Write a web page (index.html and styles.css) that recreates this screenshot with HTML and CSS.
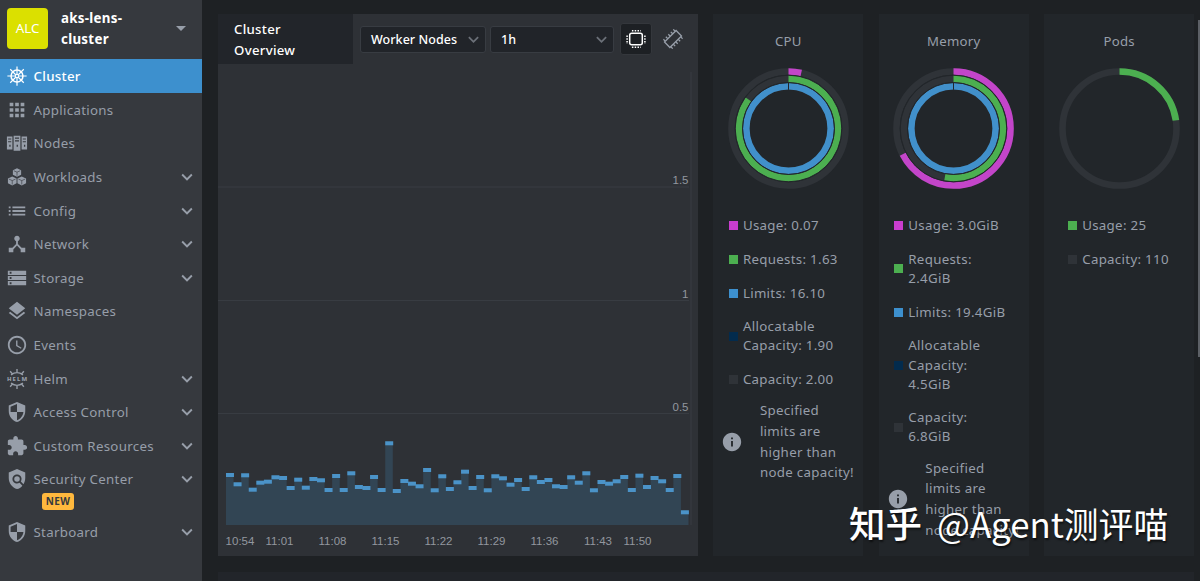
FILE: index.html
```html
<!DOCTYPE html>
<html lang="en">
<head>
    <meta charset="UTF-8">
    <meta name="viewport" content="width=device-width, initial-scale=1.0">
    <title>aks-lens-cluster</title>
    <link rel="stylesheet" href="styles.css">
</head>
<body>
    <!-- icons -->
    <svg class="sprite">
        <symbol id="wheel" viewBox="0 0 24 24">
            <g fill="none" stroke="currentColor">
                <circle cx="12" cy="12" r="6.500" stroke-width="1.700"/>
                <circle cx="12" cy="12" r="1.800" stroke-width="1.200"/>
                <path stroke-width="1.300" d="M12 1.500v8.500M12 14v8.500M1.500 12H10M14 12h8.500M4.600 4.600l6 6M13.400 13.400l6 6M19.400 4.600l-6 6M10.600 13.400l-6 6"/>
            </g>
        </symbol>
        <symbol id="apps" viewBox="0 0 24 24"><path d="M4 8h4V4H4v4zm6 12h4v-4h-4v4zm-6 0h4v-4H4v4zm0-6h4v-4H4v4zm6 0h4v-4h-4v4zm6-10v4h4V4h-4zm-6 4h4V4h-4v4zm6 6h4v-4h-4v4zm0 6h4v-4h-4v4z"/></symbol>
        <symbol id="nodes" viewBox="0 0 24 24"><path fill-rule="evenodd" d="M1 5h6v14H1zM2.300 7v1.300h3.400V7zM2.300 10v1.300h3.400V10zM3.600 14v2h1.400v-2zM8.300 4h7.400v16.500H8.300zM9.800 6v1.300h4.400V6zM9.800 9v1.300h4.400V9zM11.600 14v2h1.400v-2zM17 5h6v14h-6zM18.300 7v1.300h3.400V7zM18.300 10v1.300h3.400V10zM19.600 14v2h1.400v-2z"/></symbol>
        <symbol id="cubes" viewBox="0 0 24 24">
            <path d="M12 2.500l4.500 2v5L12 11.700 7.500 9.500v-5zM6.800 11.500l4.700 2v5.300l-4.700 2.400-4.700-2.400v-5.300zM17.200 11.500l4.700 2v5.300l-4.700 2.400-4.700-2.400v-5.300z"/>
            <path fill="none" stroke="#36393e" stroke-width=".7" d="M8.500 5.200l3.500 1.500 3.500-1.500M12 6.700v4M3.200 14.300l3.600 1.600 3.600-1.600M6.800 15.900v4.300M13.600 14.300l3.600 1.600 3.600-1.600M17.200 15.900v4.300"/>
        </symbol>
        <symbol id="list" viewBox="0 0 24 24"><path d="M3 13h2v-2H3v2zm0 4h2v-2H3v2zm0-8h2V7H3v2zm4 4h14v-2H7v2zm0 4h14v-2H7v2zM7 7v2h14V7H7z"/></symbol>
        <symbol id="hub" viewBox="0 0 24 24"><path d="M17 16l-4-4V8.820C14.160 8.400 15 7.300 15 6c0-1.660-1.340-3-3-3S9 4.340 9 6c0 1.300.84 2.400 2 2.820V12l-4 4H3v5h5v-3.050l4-4.200 4 4.200V21h5v-5h-4z"/></symbol>
        <symbol id="storage" viewBox="0 0 24 24"><path d="M2 20h20v-4.600H2V20zm2-3.300h2v2H4v-2zM2 4v4.600h20V4H2zm4 3.300H4v-2h2v2zM2 14.300h20V9.700H2v4.600zM4 11h2v2H4v-2z"/></symbol>
        <symbol id="layers" viewBox="0 0 24 24"><path d="M11.990 18.540l-7.370-5.730L3 14.070l9 7 9-7-1.630-1.270-7.380 5.740zM12 16l7.360-5.730L21 9l-9-7-9 7 1.630 1.270L12 16z"/></symbol>
        <symbol id="clock" viewBox="0 0 24 24"><path d="M11.990 2C6.470 2 2 6.480 2 12s4.470 10 9.990 10C17.520 22 22 17.520 22 12S17.520 2 11.990 2zM12 20c-4.420 0-8-3.580-8-8s3.580-8 8-8 8 3.580 8 8-3.580 8-8 8zm.5-13H11v6l5.250 3.150.75-1.230-4.500-2.670z"/></symbol>
        <symbol id="helm" viewBox="0 0 24 24">
            <path fill="none" stroke="currentColor" stroke-width="1.500" d="M5.500 7.500Q12 2.500 18.500 7.500M12 1v4M4.500 3.500l2.600 3M19.500 3.500l-2.600 3M5.500 16.500Q12 21.500 18.500 16.500M12 19v4M4.500 20.500l2.600-3M19.500 20.500l-2.600-3"/>
            <text class="helm-text" x="12" y="14.600" text-anchor="middle" textLength="22">HELM</text>
        </symbol>
        <symbol id="shield" viewBox="0 0 24 24"><path d="M12 1L3 5v6c0 5.550 3.840 10.740 9 12 5.160-1.260 9-6.450 9-12V5l-9-4zm0 10.990h7c-.53 4.120-3.280 7.790-7 8.940V12H5V6.300l7-3.110v8.800z"/></symbol>
        <symbol id="puzzle" viewBox="0 0 24 24"><path d="M20.500 11H19V7c0-1.100-.9-2-2-2h-4V3.500C13 2.120 11.880 1 10.500 1S8 2.120 8 3.500V5H4c-1.100 0-1.990.9-1.990 2v3.800H3.500c1.490 0 2.700 1.210 2.700 2.700s-1.210 2.700-2.700 2.700H2V20c0 1.100.9 2 2 2h3.800v-1.500c0-1.490 1.210-2.700 2.700-2.700 1.490 0 2.700 1.210 2.700 2.700V22H17c1.100 0 2-.9 2-2v-4h1.500c1.380 0 2.500-1.120 2.500-2.500S21.880 11 20.500 11z"/></symbol>
        <symbol id="policy" viewBox="0 0 24 24"><path d="M21 5l-9-4-9 4v6c0 5.550 3.840 10.740 9 12 2.300-.56 4.330-1.900 5.880-3.710l-3.120-3.120c-1.940 1.290-4.580 1.070-6.290-.64-1.950-1.950-1.950-5.120 0-7.070 1.950-1.950 5.120-1.950 7.070 0 1.710 1.710 1.920 4.350.64 6.290l2.900 2.900C20.290 15.690 21 13.380 21 11V5z"/><circle cx="12" cy="12" r="3"/></symbol>
        <symbol id="down" viewBox="0 0 24 24"><path d="M7.410 8.590L12 13.170l4.590-4.580L18 10l-6 6-6-6 1.410-1.410z"/></symbol>
        <symbol id="info" viewBox="0 0 24 24"><path d="M12 2C6.480 2 2 6.480 2 12s4.480 10 10 10 10-4.480 10-10S17.520 2 12 2zm1 15h-2v-6h2v6zm0-8h-2V7h2v2z"/></symbol>
        <symbol id="cpu" viewBox="0 0 20 20">
            <g fill="none" stroke="currentColor">
                <rect x="3.700" y="4.200" width="12.600" height="11.600" rx="2" stroke-width="1.500"/>
                <path stroke-width="1.500" stroke-dasharray="1.500 1.300" d="M5.900 1.700h9M5.900 18.300h9M1.100 6.400v8.600M18.900 6.400v8.600"/>
            </g>
        </symbol>
        <symbol id="ram" viewBox="0 0 20 20">
            <g fill="none" stroke="currentColor" stroke-width="1.300" transform="rotate(-45 10 10)">
                <rect x="1.800" y="6.200" width="16.400" height="7.600"/>
                <path d="M3 14v2.600M6.500 14v2.600M10 14v2.600M13.500 14v2.600M17 14v2.600M3 6V3.400M6.500 6V3.400M10 6V3.400M13.500 6V3.400M17 6V3.400"/>
            </g>
        </symbol>
    </svg>

    <div class="app">
        <aside class="sidebar">
            <div class="cluster-header">
                <div class="avatar">ALC</div>
                <div class="cluster-name">aks-lens-<br>cluster</div>
                <div class="caret"></div>
            </div>
            <nav>
                <a class="item active"><svg class="icon"><use href="#wheel"/></svg><span>Cluster</span></a>
                <a class="item"><svg class="icon"><use href="#apps"/></svg><span>Applications</span></a>
                <a class="item"><svg class="icon"><use href="#nodes"/></svg><span>Nodes</span></a>
                <a class="item"><svg class="icon"><use href="#cubes"/></svg><span>Workloads</span><svg class="arrow"><use href="#down"/></svg></a>
                <a class="item"><svg class="icon"><use href="#list"/></svg><span>Config</span><svg class="arrow"><use href="#down"/></svg></a>
                <a class="item"><svg class="icon"><use href="#hub"/></svg><span>Network</span><svg class="arrow"><use href="#down"/></svg></a>
                <a class="item"><svg class="icon"><use href="#storage"/></svg><span>Storage</span><svg class="arrow"><use href="#down"/></svg></a>
                <a class="item"><svg class="icon"><use href="#layers"/></svg><span>Namespaces</span></a>
                <a class="item"><svg class="icon"><use href="#clock"/></svg><span>Events</span></a>
                <a class="item"><svg class="icon"><use href="#helm"/></svg><span>Helm</span><svg class="arrow"><use href="#down"/></svg></a>
                <a class="item"><svg class="icon"><use href="#shield"/></svg><span>Access Control</span><svg class="arrow"><use href="#down"/></svg></a>
                <a class="item"><svg class="icon"><use href="#puzzle"/></svg><span>Custom Resources</span><svg class="arrow"><use href="#down"/></svg></a>
                <a class="item"><svg class="icon"><use href="#policy"/></svg><span>Security Center</span><svg class="arrow"><use href="#down"/></svg></a>
                <div class="new-badge">NEW</div>
                <a class="item"><svg class="icon"><use href="#shield"/></svg><span>Starboard</span><svg class="arrow"><use href="#down"/></svg></a>
            </nav>
        </aside>

        <main class="main">
            <div class="overview">
                <section class="metrics">
                    <div class="toolbar">
                        <h1 class="title">Cluster Overview</h1>
                        <div class="select nodes-select"><span>Worker Nodes</span><svg class="select-arrow"><use href="#down"/></svg></div>
                        <div class="select time-select"><span>1h</span><svg class="select-arrow"><use href="#down"/></svg></div>
                        <div class="metric-btn selected"><svg><use href="#cpu"/></svg></div>
                        <div class="metric-btn"><svg><use href="#ram"/></svg></div>
                    </div>
                    <svg class="chart" id="chart" viewBox="0 0 480 492"></svg>
                </section>

                <section class="card">
                    <h2>CPU</h2>
                    <svg class="donut" data-rings="magenta:0.036,green:0.85,blue:1"></svg>
                    <ul class="legend">
                        <li><i class="magenta"></i><span>Usage: 0.07</span></li>
                        <li><i class="green"></i><span>Requests: 1.63</span></li>
                        <li><i class="blue"></i><span>Limits: 16.10</span></li>
                        <li><i class="navy"></i><span>Allocatable<br>Capacity: 1.90</span></li>
                        <li><i class="gray"></i><span>Capacity: 2.00</span></li>
                    </ul>
                    <div class="note">
                        <svg><use href="#info"/></svg>
                        <p>Specified<br>limits are<br>higher than<br>node capacity!</p>
                    </div>
                </section>

                <section class="card">
                    <h2>Memory</h2>
                    <svg class="donut" data-rings="magenta:0.675,green:0.528,blue:1"></svg>
                    <ul class="legend">
                        <li><i class="magenta"></i><span>Usage: 3.0GiB</span></li>
                        <li><i class="green"></i><span>Requests:<br>2.4GiB</span></li>
                        <li><i class="blue"></i><span>Limits: 19.4GiB</span></li>
                        <li><i class="navy"></i><span>Allocatable<br>Capacity:<br>4.5GiB</span></li>
                        <li><i class="gray"></i><span>Capacity:<br>6.8GiB</span></li>
                    </ul>
                    <div class="note">
                        <svg><use href="#info"/></svg>
                        <p>Specified<br>limits are<br>higher than<br>node capacity!</p>
                    </div>
                </section>

                <section class="card">
                    <h2>Pods</h2>
                    <svg class="donut" data-rings="green:0.227"></svg>
                    <ul class="legend small">
                        <li><i class="green"></i><span>Usage: 25</span></li>
                        <li><i class="gray"></i><span>Capacity: 110</span></li>
                    </ul>
                </section>
            </div>
            <section class="issues"></section>
        </main>
    </div>

    <div class="scrollbar"></div>
    <div class="watermark"><b>知乎</b><span>@Agent测评喵</span></div>

<script>
    // cpu usage bars, height in px
    const bars = [52, 42.7, 51.7, 37.3, 44.3, 45.3, 49.7, 49, 39, 47.3, 39.3, 48, 46.7, 37, 51, 37, 53.7, 40, 39, 50,
        37, 83.7, 36, 46, 43.3, 40.7, 57, 36.7, 50.7, 38, 44.7, 55.3, 39, 50, 36.7, 50.7, 48.7, 42.3, 47, 38,
        49.7, 45, 47, 40.7, 40, 49.7, 44.3, 53.7, 36.7, 45, 43.3, 45.7, 50, 37, 51.3, 40, 49, 45.7, 37, 51, 14.7];
    const times = [['10:54', 22], ['11:01', 61.5], ['11:08', 114.5], ['11:15', 167.5], ['11:22', 220.5],
        ['11:29', 273.5], ['11:36', 326.5], ['11:43', 380], ['11:50', 419.5]];
    const base = 461;
    const step = 462.5 / 61;

    let chart = '';
    [['1.5', 123], ['1', 236.5], ['0.5', 349.5]].forEach(([label, y]) => {
        chart += `<line class="grid" x1="0" x2="471" y1="${y}" y2="${y}"/>`;
        chart += `<text x="470.5" y="${y - 3}" text-anchor="end">${label}</text>`;
    });
    chart += '<line class="grid" x1="473" x2="473" y1="8" y2="461"/>';
    let area = `M8 ${base}`;
    let caps = '';
    bars.forEach((h, i) => {
        const x = 8 + i * step;
        area += `V${base - h}H${x + step}`;
        caps += `<rect class="cap" x="${x}" y="${base - h}" width="${step + 0.4}" height="4"/>`;
    });
    chart += `<path class="area" d="${area}V${base}z"/>${caps}`;
    times.forEach(([label, x]) => {
        chart += `<text x="${x}" y="481" text-anchor="middle">${label}</text>`;
    });
    document.getElementById('chart').innerHTML = chart;

    // donuts, outer ring first
    document.querySelectorAll('.donut').forEach((donut) => {
        donut.setAttribute('viewBox', '-60.5 -60.5 121 121');
        const rings = donut.dataset.rings.split(',');
        let out = '';
        rings.forEach((ring, i) => {
            const [color, value] = ring.split(':');
            const r = 57 - i * 7.4;
            out += `<circle class="track" r="${r}"/>`;
            out += `<circle class="ring ${color}" r="${r}" pathLength="1" stroke-dasharray="${value} 1" transform="rotate(-90)"/>`;
            if (i > 0) {
                out += `<circle class="divider" r="${r + 3.7}"/>`;
            }
            if (value == 1) {
                out += `<line class="divider" x1="0" x2="0" y1="${-r - 3.5}" y2="${-r + 3.5}"/>`;
            }
        });
        donut.innerHTML = out;
    });
</script>
</body>
</html>
```

FILE: styles.css
```css
* {
    box-sizing: border-box;
}

body {
    margin: 0;
    height: 581px;
    overflow: hidden;
    background: #1e2124;
    color: #979ea9;
    font-family: "Noto Sans", sans-serif;
    font-size: 13.3px;
    letter-spacing: 0.3px;
}

svg {
    fill: currentColor;
    flex-shrink: 0;
}

.sprite {
    display: none;
}

.helm-text {
    font-size: 6.5px;
    font-weight: 800;
    letter-spacing: 0;
}

.app {
    display: flex;
    height: 581px;
}

/* sidebar */
.sidebar {
    width: 202px;
    flex-shrink: 0;
    background: #36393e;
}

.cluster-header {
    display: flex;
    align-items: center;
    height: 59px;
    padding: 0 16px 2px 7px;
}

.avatar {
    width: 41px;
    height: 41px;
    line-height: 41px;
    border-radius: 4px;
    background: #dbe000;
    color: #fff;
    text-align: center;
    letter-spacing: 0;
}

.cluster-name {
    flex: 1;
    margin-left: 13px;
    color: #fff;
    font-weight: 700;
    line-height: 21px;
}

.caret {
    border: 5px solid transparent;
    border-top-color: #979ea9;
    border-bottom: 0;
}

.item {
    display: flex;
    align-items: center;
    height: 33.6px;
    padding: 0 4px 0 6px;
}

.item.active {
    height: 34px;
    background: #3d90ce;
    color: #fff;
    font-weight: 500;
}

.item span {
    flex: 1;
    margin-left: 5.5px;
}

.icon {
    width: 22px;
    height: 22px;
}

.arrow {
    width: 22px;
    height: 22px;
}

.new-badge {
    width: 32px;
    height: 17px;
    margin: -3px 0 5.5px 42px;
    border-radius: 3px;
    background: #ffb83d;
    color: #36393e;
    font-size: 10px;
    font-weight: 700;
    line-height: 17px;
    text-align: center;
}

/* main */
.main {
    flex: 1;
    padding: 14px 6px 0 16px;
}

.overview {
    display: grid;
    grid-template-columns: 480px 150px 150px 150px;
    column-gap: 15.4px;
    height: 542px;
}

.metrics {
    background: #2e3136;
}

.toolbar {
    display: flex;
    align-items: center;
    height: 50px;
}

.title {
    width: 135px;
    height: 50px;
    margin: 0 7px 0 0;
    padding: 5px 50px 0 16px;
    background: #22252a;
    color: #fff;
    font-size: 13.2px;
    font-weight: 500;
    line-height: 21px;
}

.select {
    display: flex;
    align-items: center;
    justify-content: space-between;
    height: 27px;
    padding: 0 1px 0 10px;
    border: 1px solid #383c42;
    border-radius: 3px;
    background: #212429;
    color: #fff;
    font-size: 12.5px;
    font-weight: 500;
    letter-spacing: 0.05px;
}

.nodes-select {
    width: 126px;
    margin-right: 4px;
}

.time-select {
    width: 124px;
    margin-right: 6px;
}

.select-arrow {
    width: 21px;
    height: 21px;
    color: #6b7078;
}

.metric-btn {
    display: flex;
    align-items: center;
    justify-content: center;
    width: 32px;
    height: 32px;
    margin-right: 5px;
    border-radius: 3px;
}

.metric-btn.selected {
    border: 1px solid #34373c;
    background: #1d2024;
    color: #fff;
}

.metric-btn svg {
    width: 20px;
    height: 20px;
}

.chart {
    display: block;
    width: 480px;
    height: 492px;
}

.chart text {
    fill: #92979f;
    font-family: "Liberation Sans", Arial, sans-serif;
    font-size: 11.5px;
    letter-spacing: 0;
}

.grid {
    stroke: #383c42;
}

.area {
    fill: #324554;
}

.cap {
    fill: #4b93c8;
}

/* cards */
.card {
    display: flex;
    flex-direction: column;
    align-items: center;
    background: #22262a;
}

.card h2 {
    margin: 17px 0 16.6px;
    font-size: 13.2px;
    font-weight: 400;
    line-height: 20px;
}

.donut {
    width: 121px;
    height: 121px;
}

.track,
.ring {
    fill: none;
    stroke-width: 6.6;
}

.track {
    stroke: #2f3338;
}

.ring.magenta {
    stroke: #c345c9;
}

.ring.green {
    stroke: #4caf50;
}

.ring.blue {
    stroke: #4190cb;
}

.divider {
    fill: none;
    stroke: #22262a;
    stroke-width: 1;
}

.legend {
    width: 119px;
    margin: 27.4px 0 0;
    padding: 0;
    list-style: none;
    line-height: 19.1px;
}

.legend.small {
    width: 102px;
}

.legend li {
    display: flex;
    align-items: center;
    margin-bottom: 14.7px;
    white-space: nowrap;
}

.legend i {
    width: 9px;
    height: 9px;
    margin-right: 5px;
}

i.magenta {
    background: #c93dce;
}

i.green {
    background: #4caf50;
}

i.blue {
    background: #3d90ce;
}

i.navy {
    background: #032b4d;
}

i.gray {
    background: #2f3338;
}

.note {
    display: flex;
    align-items: center;
    width: 128px;
    margin-top: -3.5px;
}

.note svg {
    width: 22px;
    height: 22px;
    margin-left: -3px;
}

.note p {
    margin: 0 0 0 16.5px;
    line-height: 20.6px;
    white-space: nowrap;
}

.issues {
    height: 20px;
    margin-top: 16px;
    background: #22252a;
}

.scrollbar {
    position: absolute;
    top: 20px;
    right: 0;
    width: 2px;
    height: 337px;
    background: #5c6066;
}

.watermark {
    position: absolute;
    left: 849px;
    top: 497px;
    color: #fff;
    font-family: "Noto Sans CJK SC", sans-serif;
    font-size: 34.8px;
    line-height: 52px;
    letter-spacing: 0;
    white-space: nowrap;
    text-shadow: 1px 2px 2px rgba(0, 0, 0, 0.6);
}

.watermark b {
    margin-right: 15px;
    font-size: 36.5px;
    font-weight: 500;
}
```
